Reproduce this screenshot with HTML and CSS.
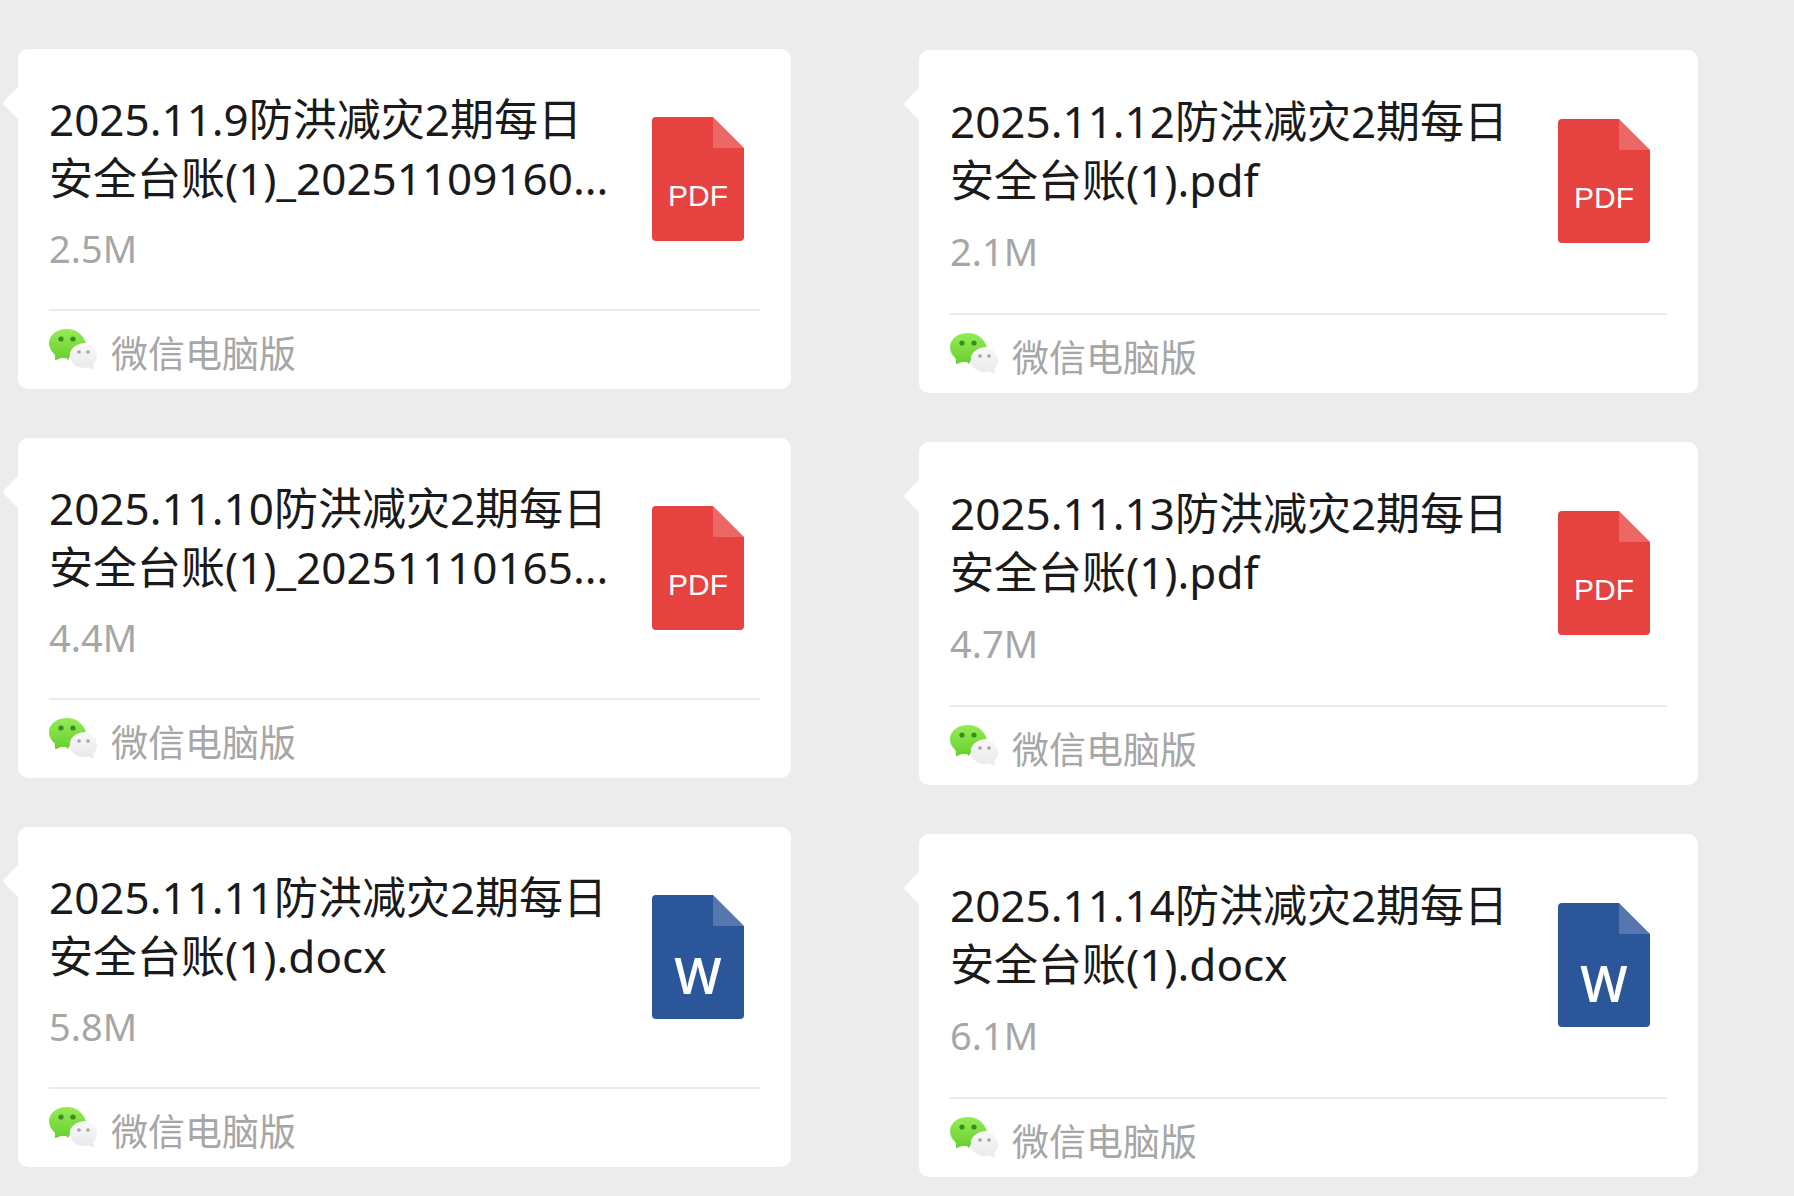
FILE: index.html
```html
<!DOCTYPE html>
<html lang="zh-CN">
<head>
  <meta charset="UTF-8" />
  <meta name="viewport" content="width=device-width, initial-scale=1.0" />
  <title>防洪减灾2期每日安全台账</title>
  <link rel="stylesheet" href="styles.css">
</head>
<body>
  <!-- Shared icons -->
  <svg class="sprite" aria-hidden="true">
    <defs>
      <linearGradient id="green" x1="0" y1="0" x2="0" y2="1">
        <stop offset="0" stop-color="#95ec55" />
        <stop offset="1" stop-color="#68cf30" />
      </linearGradient>
      <linearGradient id="silver" x1="0" y1="0" x2="0" y2="1">
        <stop offset="0" stop-color="#f8f8f9" />
        <stop offset="1" stop-color="#e9e9ec" />
      </linearGradient>
    </defs>
    <symbol id="page" viewBox="0 0 92 124">
      <path fill="currentColor" d="M4 0H61L92 31V120a4 4 0 0 1-4 4H4a4 4 0 0 1-4-4V4a4 4 0 0 1 4-4z" />
      <path fill="#fff" fill-opacity="0.2" d="M61 0L92 31H61z" />
    </symbol>
    <symbol id="wechat" viewBox="0 0 50 42">
      <path fill="url(#green)" d="M18 0C28 0 34 6 37 14C29 14 22 18 21 25C21 27 21 28 20 29L19 31L17 29C15 29 13 29 12 29L7 31C6 31 6 31 6 30L6 26C3 23 0 19 0 14C0 6 8 0 18 0z" />
      <circle fill="#3c8a24" cx="12" cy="10" r="2.6" />
      <circle fill="#3c8a24" cx="24" cy="10" r="2.6" />
      <path fill="url(#silver)" d="M35 15C43 15 48 20 48 27C48 31 46 34 44 36L45 39C45 40 44 40 43 40L39 38C38 39 36 39 35 39C27 39 21 34 21 27C21 20 27 15 35 15z" />
      <circle fill="#a5a5a8" cx="30" cy="23" r="1.8" />
      <circle fill="#a5a5a8" cx="39" cy="23" r="1.8" />
    </symbol>
  </svg>

  <main class="chat">
    <section class="column">
      <article class="card">
        <div class="card-body">
          <div class="info">
            <h2>2025.11.9防洪减灾2期每日<br>安全台账(1)_20251109160...</h2>
            <p>2.5M</p>
          </div>
          <div class="file-icon pdf"><svg><use href="#page" /></svg><span>PDF</span></div>
        </div>
        <div class="card-footer">
          <svg class="wechat-icon"><use href="#wechat" /></svg>
          <span>微信电脑版</span>
        </div>
      </article>
      <article class="card">
        <div class="card-body">
          <div class="info">
            <h2>2025.11.10防洪减灾2期每日<br>安全台账(1)_20251110165...</h2>
            <p>4.4M</p>
          </div>
          <div class="file-icon pdf"><svg><use href="#page" /></svg><span>PDF</span></div>
        </div>
        <div class="card-footer">
          <svg class="wechat-icon"><use href="#wechat" /></svg>
          <span>微信电脑版</span>
        </div>
      </article>
      <article class="card">
        <div class="card-body">
          <div class="info">
            <h2>2025.11.11防洪减灾2期每日<br>安全台账(1).docx</h2>
            <p>5.8M</p>
          </div>
          <div class="file-icon word"><svg><use href="#page" /></svg><span>W</span></div>
        </div>
        <div class="card-footer">
          <svg class="wechat-icon"><use href="#wechat" /></svg>
          <span>微信电脑版</span>
        </div>
      </article>
    </section>

    <section class="column column-right">
      <article class="card">
        <div class="card-body">
          <div class="info">
            <h2>2025.11.12防洪减灾2期每日<br>安全台账(1).pdf</h2>
            <p>2.1M</p>
          </div>
          <div class="file-icon pdf"><svg><use href="#page" /></svg><span>PDF</span></div>
        </div>
        <div class="card-footer">
          <svg class="wechat-icon"><use href="#wechat" /></svg>
          <span>微信电脑版</span>
        </div>
      </article>
      <article class="card">
        <div class="card-body">
          <div class="info">
            <h2>2025.11.13防洪减灾2期每日<br>安全台账(1).pdf</h2>
            <p>4.7M</p>
          </div>
          <div class="file-icon pdf"><svg><use href="#page" /></svg><span>PDF</span></div>
        </div>
        <div class="card-footer">
          <svg class="wechat-icon"><use href="#wechat" /></svg>
          <span>微信电脑版</span>
        </div>
      </article>
      <article class="card">
        <div class="card-body">
          <div class="info">
            <h2>2025.11.14防洪减灾2期每日<br>安全台账(1).docx</h2>
            <p>6.1M</p>
          </div>
          <div class="file-icon word"><svg><use href="#page" /></svg><span>W</span></div>
        </div>
        <div class="card-footer">
          <svg class="wechat-icon"><use href="#wechat" /></svg>
          <span>微信电脑版</span>
        </div>
      </article>
    </section>
  </main>
</body>
</html>
```

FILE: styles.css
```css
/* Base Styles */
* {
  box-sizing: border-box;
  margin: 0;
  padding: 0;
}
body {
  font-family: "Noto Sans", "Noto Sans CJK SC", sans-serif;
  background-color: #ececec;
  color: #1a1a1a;
}
.sprite {
  position: absolute;
  width: 0;
  height: 0;
}

/* Two columns of messages */
.chat {
  display: grid;
  grid-template-columns: 773fr 779fr;
  gap: 128px;
  padding: 49px 96px 18px 18px;
}
.column {
  display: flex;
  flex-direction: column;
  gap: 49px;
}
.column-right {
  padding-top: 1px;
}

/* File card */
.card {
  position: relative;
  padding: 0 31px;
  background: #fff;
  border-radius: 10px;
}
.card::before {
  content: "";
  position: absolute;
  top: 42px;
  left: -11px;
  width: 24px;
  height: 24px;
  background: #fff;
  border-radius: 4px;
  transform: rotate(45deg);
}
.card-body {
  display: flex;
  justify-content: space-between;
  padding: 41px 16px 35px 0;
  border-bottom: 2px solid #ebebeb;
}
.column-right .card-body {
  padding: 42px 17px 36px 0;
}
.info h2 {
  font-size: 44px;
  font-weight: 400;
  line-height: 59px;
  white-space: nowrap;
}
.info p {
  margin-top: 14px;
  font-size: 38px;
  line-height: 52px;
  color: #a6a6a6;
}
.column-right .info p {
  margin-top: 15px;
}
.card-footer {
  display: flex;
  align-items: flex-start;
  gap: 12px;
  height: 78px;
  padding-top: 18px;
  color: #a6a6a6;
}
.wechat-icon {
  width: 50px;
  height: 42px;
}
.card-footer span {
  font-size: 37px;
  line-height: 50px;
}

/* File type icon */
.file-icon {
  position: relative;
  flex: none;
  width: 92px;
  height: 124px;
  margin-top: 27px;
}
.file-icon svg {
  display: block;
  width: 100%;
  height: 100%;
}
.file-icon span {
  position: absolute;
  left: 0;
  width: 100%;
  color: #fff;
  text-align: center;
}
.pdf {
  color: #e64340;
}
.pdf span {
  top: 62px;
  font-family: "Liberation Sans", Arial, sans-serif;
  font-size: 30px;
  line-height: 34px;
}
.word {
  color: #2b5699;
}
.word span {
  top: 50px;
  font-family: "Open Sans", sans-serif;
  font-size: 50px;
  font-weight: 600;
  line-height: 60px;
}
```
